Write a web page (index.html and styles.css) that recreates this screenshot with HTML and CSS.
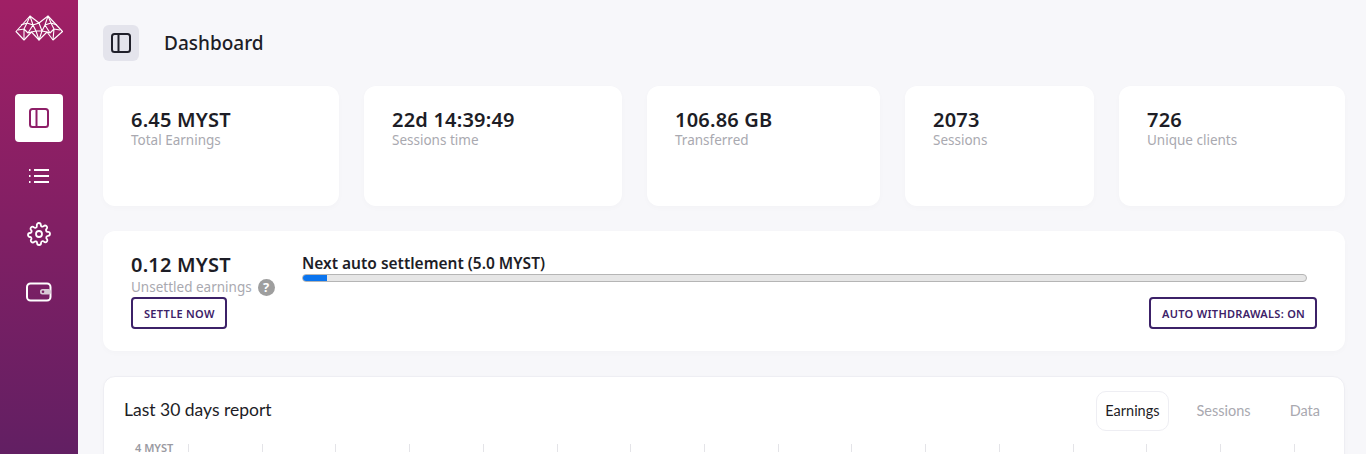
FILE: index.html
```html
<!DOCTYPE html>
<html lang="en">
<head>
    <meta charset="UTF-8">
    <title>Dashboard</title>
    <link rel="stylesheet" href="styles.css">
</head>
<body>
    <div class="app">
        <nav class="sidebar">
            <svg class="logo" width="48" height="28" viewBox="0 0 48 28" fill="none" stroke="#fff" stroke-width="1.1" stroke-linejoin="round">
                <path d="M1 16.5 L15 1 L24 8 L33 1 L47.5 16.5 L38 25 L32 17 L24 25 L16.5 17 L9 25 Z"/>
                <path d="M15 1 L12 8 L18 10 L15 1 M12 8 L6 10 M12 8 L9 14 L3 15 M9 14 L13 18 L18 10 L24 8 M9 14 L9 25 M13 18 L16.5 17 M18 10 L21 16 L27 16 L24 8 M21 16 L24 25 L27 16 M21 16 L16.5 17 M33 1 L36 8 L30 10 L33 1 M36 8 L42 10 M36 8 L39 14 L45 15 M39 14 L35 18 L30 10 M39 14 L38 25 M35 18 L32 17 M30 10 L27 16 M27 16 L32 17"/>
            </svg>
            <a class="nav-item active" href="#">
                <svg width="20" height="20" viewBox="0 0 20 20" fill="none" stroke="#8e1f68" stroke-width="2"><rect x="1" y="1" width="18" height="18" rx="2.5"/><path d="M7.5 1 V19"/></svg>
            </a>
            <a class="nav-item" href="#">
                <svg width="20" height="16" viewBox="0 0 20 16" fill="none" stroke="#fff" stroke-width="2"><path d="M5 2 H20 M5 8 H20 M5 14 H20"/><path d="M0 2 H1.5 M0 8 H1.5 M0 14 H1.5"/></svg>
            </a>
            <a class="nav-item" href="#">
                <svg width="24" height="24" viewBox="0 0 24 24" fill="none" stroke="#fff" stroke-width="1.8" stroke-linejoin="round"><circle cx="12" cy="12" r="3"/><path d="M19.4 15a1.65 1.65 0 0 0 .33 1.82l.06.06a2 2 0 1 1-2.83 2.83l-.06-.06a1.65 1.65 0 0 0-2.82 1.17V21a2 2 0 1 1-4 0v-.09a1.65 1.65 0 0 0-2.82-1.08l-.06.06a2 2 0 1 1-2.83-2.83l.06-.06A1.65 1.65 0 0 0 3.09 15H3a2 2 0 1 1 0-4h.09a1.65 1.65 0 0 0 1.08-2.82l-.06-.06a2 2 0 1 1 2.83-2.83l.06.06A1.65 1.65 0 0 0 9.83 4.2V3a2 2 0 1 1 4 0v.09a1.65 1.65 0 0 0 2.82 1.08l.06-.06a2 2 0 1 1 2.83 2.83l-.06.06a1.65 1.65 0 0 0 1.17 2.82H21a2 2 0 1 1 0 4h-.09a1.65 1.65 0 0 0-1.51 1z"/></svg>
            </a>
            <a class="nav-item" href="#">
                <svg width="26" height="20" viewBox="0 0 26 20" fill="none"><rect x="1" y="1.5" width="23.5" height="17" rx="3.5" stroke="#fff" stroke-width="2"/><rect x="14" y="7" width="11" height="5.5" rx="2.5" fill="#d9c9d6"/><circle cx="17" cy="9.7" r="1.3" fill="#7c2064"/></svg>
            </a>
        </nav>
        <main class="content">
            <header class="topbar">
                <button class="toggle">
                    <svg width="20" height="20" viewBox="0 0 20 20" fill="none" stroke="#20202a" stroke-width="2"><rect x="1" y="1" width="18" height="18" rx="2.5"/><path d="M7.5 1 V19"/></svg>
                </button>
                <h1>Dashboard</h1>
            </header>

            <section class="stats">
                <div class="card stat"><div class="value">6.45 MYST</div><div class="label">Total Earnings</div></div>
                <div class="card stat"><div class="value">22d 14:39:49</div><div class="label">Sessions time</div></div>
                <div class="card stat"><div class="value">106.86 GB</div><div class="label">Transferred</div></div>
                <div class="card stat"><div class="value">2073</div><div class="label">Sessions</div></div>
                <div class="card stat"><div class="value">726</div><div class="label">Unique clients</div></div>
            </section>

            <section class="card settlement">
                <div class="unsettled">
                    <div class="value">0.12 MYST</div>
                    <div class="label">Unsettled earnings <span class="help">?</span></div>
                    <button class="outline">SETTLE NOW</button>
                </div>
                <div class="progress-wrap">
                    <div class="progress-title">Next auto settlement (5.0 MYST)</div>
                    <div class="progress"><div class="progress-fill" style="width: 2.4%"></div></div>
                    <div class="button-wrapper"><button class="outline">AUTO WITHDRAWALS: ON</button></div>
                </div>
            </section>

            <section class="card report">
                <div class="report-head">
                    <h2>Last 30 days report</h2>
                    <div class="tabs">
                        <span class="tab active">Earnings</span>
                        <span class="tab">Sessions</span>
                        <span class="tab">Data</span>
                    </div>
                </div>
                <div class="chart-row">
                    <span class="axis-label">4 MYST</span>
                    <div class="ticks">
                        <i></i><i></i><i></i><i></i><i></i><i></i><i></i><i></i><i></i><i></i><i></i><i></i><i></i><i></i><i></i><i></i>
                    </div>
                </div>
            </section>
        </main>
    </div>
</body>
</html>
```

FILE: styles.css
```css
* {
    box-sizing: border-box;
}

html, body {
    margin: 0;
    height: 100%;
    overflow: hidden;
}

body {
    font-family: "Noto Sans", sans-serif;
    background: #f7f7fa;
    color: #1d1d26;
}

.app {
    display: flex;
    height: 454px;
    overflow: hidden;
}

.sidebar {
    width: 78px;
    flex: none;
    display: flex;
    flex-direction: column;
    align-items: center;
    padding-top: 15px;
    background: linear-gradient(180deg, #a01f65 0%, #621f63 100%);
}

.logo {
    margin-bottom: 51px;
}

.nav-item {
    width: 48px;
    height: 48px;
    margin-bottom: 10px;
    border-radius: 4px;
    display: flex;
    align-items: center;
    justify-content: center;
}

.nav-item.active {
    background: #fff;
}

.content {
    flex: 1;
    min-width: 0;
    padding: 25px 21px 0 25px;
}

.topbar {
    display: flex;
    align-items: center;
    height: 36px;
    margin-bottom: 25px;
}

.toggle {
    width: 36px;
    height: 36px;
    padding: 0;
    border: none;
    border-radius: 6px;
    background: #e4e4ec;
    display: flex;
    align-items: center;
    justify-content: center;
}

h1 {
    margin: 0 0 0 25px;
    font-size: 19px;
    font-weight: 500;
    line-height: 36px;
}

.card {
    background: #fff;
    border-radius: 12px;
    box-shadow: 0 2px 6px rgba(30, 30, 60, 0.02);
}

.stats {
    display: grid;
    grid-template-columns: 236px 258px 233px 189px 226px;
    gap: 25px;
    margin-bottom: 25px;
}

.stat {
    height: 120px;
    padding: 22px 28px;
}

.value {
    font-size: 20px;
    font-weight: 600;
    line-height: 24px;
    letter-spacing: 0.2px;
}

.label {
    font-size: 13.5px;
    line-height: 16px;
    color: #a9a9b0;
}

.settlement {
    display: flex;
    height: 120px;
    padding: 22px 28px 0;
    margin-bottom: 25px;
}

.unsettled {
    width: 171px;
    flex: none;
}

.unsettled .label {
    display: flex;
    align-items: center;
    gap: 6px;
    height: 18px;
    margin-top: 1px;
    white-space: nowrap;
}

.help {
    width: 17px;
    height: 17px;
    border-radius: 50%;
    background: #9e9e9e;
    color: #fff;
    font-size: 13px;
    font-weight: 700;
    line-height: 17px;
    text-align: center;
}

.outline {
    font-family: "Noto Sans", sans-serif;
    height: 32px;
    padding: 0 11px;
    border: 2px solid #3c2168;
    border-radius: 4px;
    background: #fff;
    color: #3c2168;
    font-size: 11px;
    font-weight: 600;
    letter-spacing: 0.3px;
    white-space: nowrap;
}

.unsettled .outline {
    margin-top: 1px;
    width: 96px;
}

.progress-wrap {
    flex: 1;
}

.progress-title {
    font-size: 15.5px;
    font-weight: 600;
    line-height: 20px;
}

.progress {
    height: 8px;
    margin: 1px 10px 0 0;
    border: 1px solid #b5b5b5;
    border-radius: 4px;
    background: #e6e6e6;
    overflow: hidden;
}

.progress-fill {
    height: 100%;
    background: #0a74ee;
}

.button-wrapper {
    display: flex;
    justify-content: flex-end;
    margin-top: 15px;
}

.button-wrapper .outline {
    width: 168px;
}

.report {
    height: 200px;
    padding: 14px 15px 0 20px;
    border: 1px solid #eeeef3;
}

.report-head {
    display: flex;
    align-items: center;
    justify-content: space-between;
    height: 40px;
}

h2 {
    margin: -3px 0 0;
    font-family: "Lato", sans-serif;
    font-size: 17.5px;
    font-weight: 400;
}

.tabs {
    display: flex;
    align-items: center;
    gap: 21px;
    color: #a9a9b0;
    font-family: "Lato", sans-serif;
    font-size: 14.5px;
}

.tab {
    height: 40px;
    padding: 0 8px;
    line-height: 38px;
    border: 1px solid transparent;
    border-radius: 10px;
}

.tab.active {
    margin-right: -2px;
    border-color: #eeeef3;
    color: #1d1d26;
}

.chart-row {
    display: flex;
    margin-top: 11px;
}

.axis-label {
    width: 53px;
    margin-left: 11px;
    font-size: 11px;
    font-weight: 600;
    color: #9a9aa2;
    line-height: 12px;
    white-space: nowrap;
}

.ticks {
    flex: 1;
    display: flex;
    justify-content: space-between;
    padding-right: 34px;
    margin-top: 2px;
}

.ticks i {
    width: 1px;
    height: 8px;
    background: #e4e4e8;
}
```
